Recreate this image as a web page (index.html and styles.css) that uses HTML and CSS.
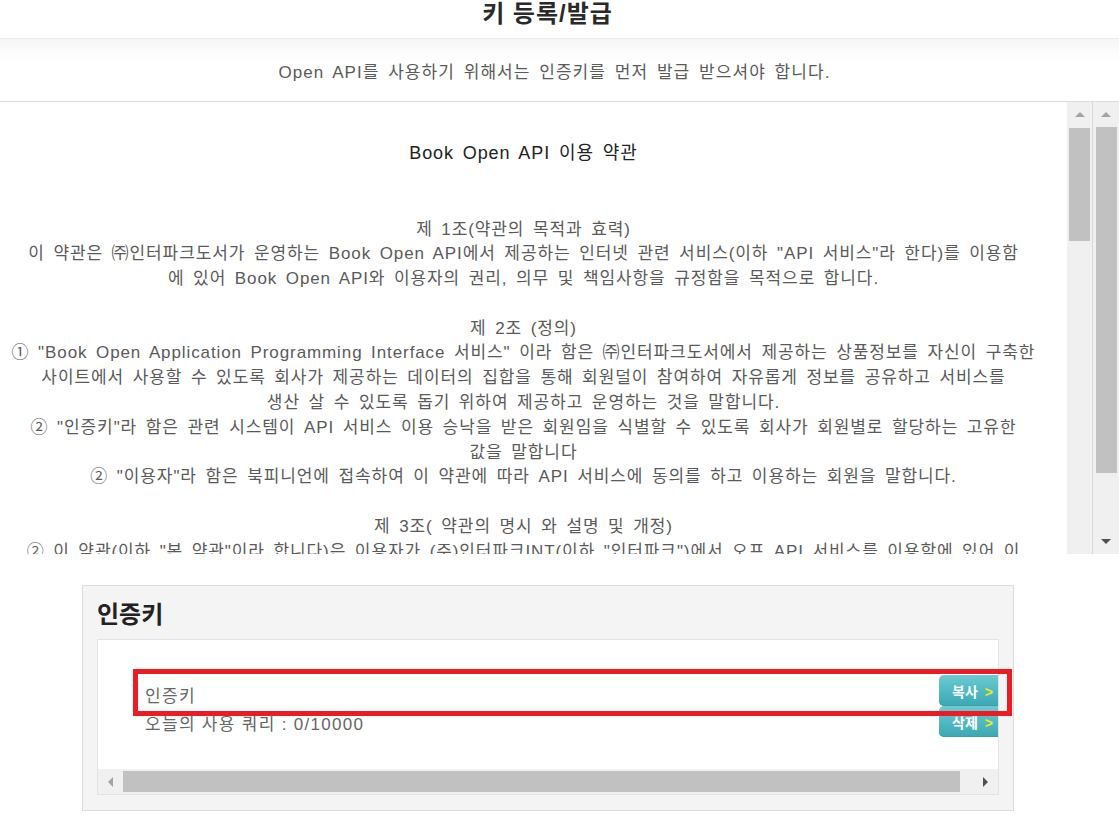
FILE: index.html
```html
<!DOCTYPE html>
<html lang="ko">
<head>
  <meta charset="UTF-8">
  <meta name="viewport" content="width=device-width, initial-scale=1.0">
  <title>키 등록/발급</title>
  <link rel="stylesheet" href="styles.css">
</head>
<body>
  <h1 class="page-title">키 등록/발급</h1>

  <!-- 안내 문구 -->
  <div class="intro">Open API를 사용하기 위해서는 인증키를 먼저 발급 받으셔야 합니다.</div>

  <!-- 이용 약관 -->
  <div class="terms">
    <div class="terms-view">
      <div class="terms-text">
        <p class="terms-title">Book Open API 이용 약관</p>
        <p>
          제 1조(약관의 목적과 효력)<br>
          이 약관은 ㈜인터파크도서가 운영하는 Book Open API에서 제공하는 인터넷 관련 서비스(이하 "API 서비스"라 한다)를 이용함<br>
          에 있어 Book Open API와 이용자의 권리, 의무 및 책임사항을 규정함을 목적으로 합니다.<br>
          <br>
          제 2조 (정의)<br>
          ① "Book Open Application Programming Interface 서비스" 이라 함은 ㈜인터파크도서에서 제공하는 상품정보를 자신이 구축한<br>
          사이트에서 사용할 수 있도록 회사가 제공하는 데이터의 집합을 통해 회원덜이 참여하여 자유롭게 정보를 공유하고 서비스를<br>
          생산 살 수 있도록 돕기 위하여 제공하고 운영하는 것을 말합니다.<br>
          ② "인증키"라 함은 관련 시스템이 API 서비스 이용 승낙을 받은 회원임을 식별할 수 있도록 회사가 회원별로 할당하는 고유한<br>
          값을 말합니다<br>
          ② "이용자"라 함은 북피니언에 접속하여 이 약관에 따라 API 서비스에 동의를 하고 이용하는 회원을 말합니다.<br>
          <br>
          제 3조( 약관의 명시 와 설명 및 개정)<br>
          ② 이 약관(이하 "본 약관"이라 합니다)은 이용자가 (주)인터파크INT(이하 "인터파크")에서 오프 API 서비스를 이용함에 있어 이<br>
          용자와 인터파크 사이의 권리, 의무 및 책임사항을 규정하는 것을 목적으로 합니다.
        </p>
      </div>
      <div class="vscroll">
        <div class="sb-btn"><span class="arrow-up"></span></div>
        <div class="thumb inner-thumb"></div>
      </div>
    </div>
    <div class="vscroll outer">
      <div class="sb-btn"><span class="arrow-up"></span></div>
      <div class="thumb outer-thumb"></div>
      <div class="sb-btn bottom"><span class="arrow-down"></span></div>
    </div>
  </div>

  <!-- 인증키 영역 -->
  <div class="key-panel">
    <h2 class="key-heading">인증키</h2>
    <div class="key-box">
      <div class="key-body">
        <div class="key-info">
          <p>인증키</p>
          <p>오늘의 사용 쿼리 : 0/10000</p>
        </div>
        <div class="key-buttons">
          <button class="key-btn">복사 <span class="chev">&gt;</span></button>
          <button class="key-btn">삭제 <span class="chev">&gt;</span></button>
        </div>
      </div>
      <div class="hscroll">
        <div class="sb-btn"><span class="arrow-left"></span></div>
        <div class="thumb h-thumb"></div>
        <div class="sb-btn right"><span class="arrow-right"></span></div>
      </div>
    </div>
    <!-- 강조 표시 -->
    <div class="highlight"></div>
  </div>
</body>
</html>
```

FILE: styles.css
```css
/* 기본 */
body {
  margin: 0;
  font-family: "Liberation Sans", "Noto Sans CJK KR", sans-serif;
  color: #5a5a5a;
  background: #fff;
}
p {
  margin: 0;
}

/* 제목 */
.page-title {
  margin: 0;
  height: 38px;
  padding-right: 24px;
  line-height: 28px;
  font-size: 24px;
  letter-spacing: 1px;
  font-weight: bold;
  color: #2a2a2a;
  text-align: center;
  border-bottom: 1px solid #ececec;
}
.intro {
  padding: 24px 10px 18px 0;
  line-height: 20px;
  font-size: 17px;
  letter-spacing: 1.05px;
  word-spacing: 3px;
  text-align: center;
  background: linear-gradient(#f6f6f6, #fff 22px);
  border-bottom: 1px solid #dcdcdc;
}

/* 약관 */
.terms {
  display: flex;
  height: 452px;
  overflow: hidden;
}
.terms-view {
  flex: 1;
  display: flex;
  min-width: 0;
  overflow: hidden;
}
.terms-text {
  flex: 1;
  min-width: 0;
  padding: 41px 20px 0 0;
  font-size: 17px;
  line-height: 24.8px;
  letter-spacing: 0.9px;
  word-spacing: 3px;
  text-align: center;
  white-space: nowrap;
  overflow: hidden;
}
.terms-title {
  font-size: 18px;
  line-height: 20px;
  letter-spacing: 0.9px;
  color: #222;
  margin-bottom: 54.5px;
}

/* 스크롤바 */
.vscroll {
  width: 25px;
  background: #f0f0f0;
  display: flex;
  flex-direction: column;
  align-items: center;
  flex-shrink: 0;
}
.vscroll.outer {
  width: 26px;
  border-left: 1px solid #d8d8d8;
}
.sb-btn {
  width: 25px;
  height: 25px;
  flex-shrink: 0;
  display: flex;
  align-items: center;
  justify-content: center;
}
.sb-btn.bottom {
  margin-top: auto;
}
.sb-btn.right {
  margin-left: auto;
}
.thumb {
  background: #c1c1c1;
}
.inner-thumb {
  width: 21px;
  height: 113px;
  margin-top: 1px;
}
.outer-thumb {
  width: 21px;
  height: 346px;
}
.arrow-up, .arrow-down, .arrow-left, .arrow-right {
  width: 0;
  height: 0;
  border: 5px solid transparent;
}
.arrow-up {
  border-top: 0;
  border-bottom-color: #a3a3a3;
}
.arrow-down {
  border-bottom: 0;
  border-top-color: #505050;
}
.arrow-left {
  border-left: 0;
  border-right-color: #a3a3a3;
}
.arrow-right {
  border-right: 0;
  border-left-color: #505050;
}

/* 인증키 패널 */
.key-panel {
  position: relative;
  width: 932px;
  box-sizing: border-box;
  margin: 31px 0 0 82px;
  padding: 15px 14px;
  background: #f4f4f4;
  border: 1px solid #dcdcdc;
}
.key-heading {
  margin: 0 0 10px;
  font-size: 24px;
  line-height: 28px;
  color: #222;
}
.key-box {
  background: #fff;
  border: 1px solid #e3e3e3;
}
.key-body {
  display: flex;
  align-items: flex-start;
  height: 129px;
  overflow: hidden;
}
.key-info {
  flex: 1;
  margin-top: 43px;
  padding-left: 47px;
  font-size: 17px;
  line-height: 28px;
  letter-spacing: 1.3px;
  color: #666;
}
.key-buttons {
  width: 59px;
  margin-top: 35px;
  display: flex;
  flex-direction: column;
}
.key-btn {
  height: 31px;
  padding: 0 0 0 13px;
  border: none;
  border-radius: 5px 0 0 5px;
  background: linear-gradient(#6ccad2, #3aa8b3);
  color: #fff;
  font-family: inherit;
  font-size: 14px;
  font-weight: bold;
  text-align: left;
  box-shadow: inset 0 -1px 0 #3b9ea8;
}
.chev {
  color: #f3ea1a;
  margin-left: 3px;
}
.hscroll {
  display: flex;
  align-items: center;
  height: 25px;
  background: #f0f0f0;
}
.h-thumb {
  width: 837px;
  height: 21px;
}
.highlight {
  position: absolute;
  left: 50px;
  top: 83px;
  width: 879px;
  height: 47px;
  box-sizing: border-box;
  border: 5px solid #ed1c24;
}
```
